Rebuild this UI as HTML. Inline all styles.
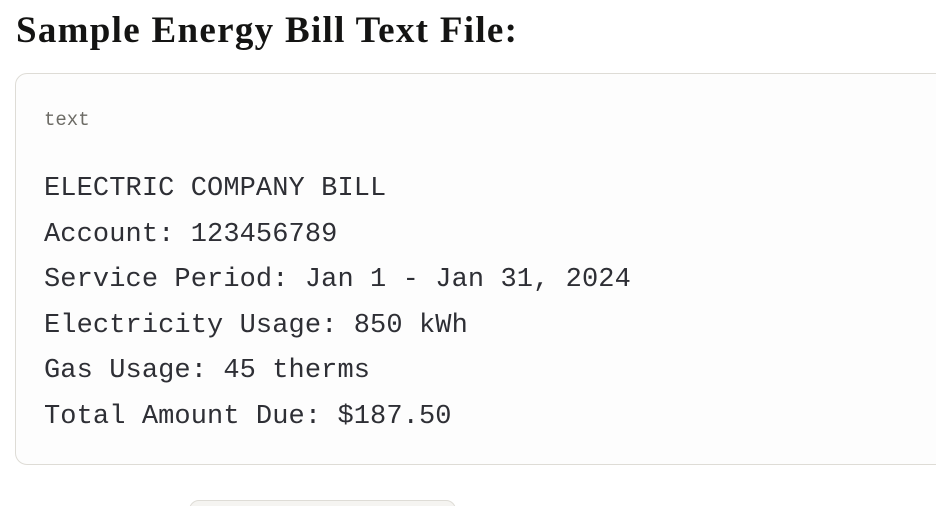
<!DOCTYPE html>
<html><head><meta charset="utf-8"><style>
html,body{margin:0;padding:0;background:#fff;width:936px;height:506px;overflow:hidden;position:relative}
h1{position:absolute;left:16px;top:9px;margin:0;font-family:"Liberation Serif",serif;font-weight:bold;font-size:37px;line-height:44px;color:#141413;letter-spacing:1.3px;white-space:nowrap}
.box{position:absolute;left:15px;top:73px;width:960px;height:392px;border:1px solid #dedcd6;border-radius:12px;background:#fdfdfd;box-sizing:border-box}
.lbl{position:absolute;left:44px;top:108px;font-family:"Liberation Mono",monospace;font-size:19px;line-height:24px;color:#6d6c66}
pre{position:absolute;left:44px;top:167px;margin:0;font-family:"Liberation Mono",monospace;font-size:27px;line-height:45.5px;color:#2e2f35;letter-spacing:0.1px}
.btm{position:absolute;left:189px;top:500px;width:267px;height:20px;border:1px solid #dedcd6;border-radius:10px;background:#f5f4f1;box-sizing:border-box}
</style></head><body>
<h1>Sample Energy Bill Text File:</h1>
<div class="box"></div>
<div class="lbl">text</div>
<pre>ELECTRIC COMPANY BILL
Account: 123456789
Service Period: Jan 1 - Jan 31, 2024
Electricity Usage: 850 kWh
Gas Usage: 45 therms
Total Amount Due: $187.50</pre>
<div class="btm"></div>
</body></html>
